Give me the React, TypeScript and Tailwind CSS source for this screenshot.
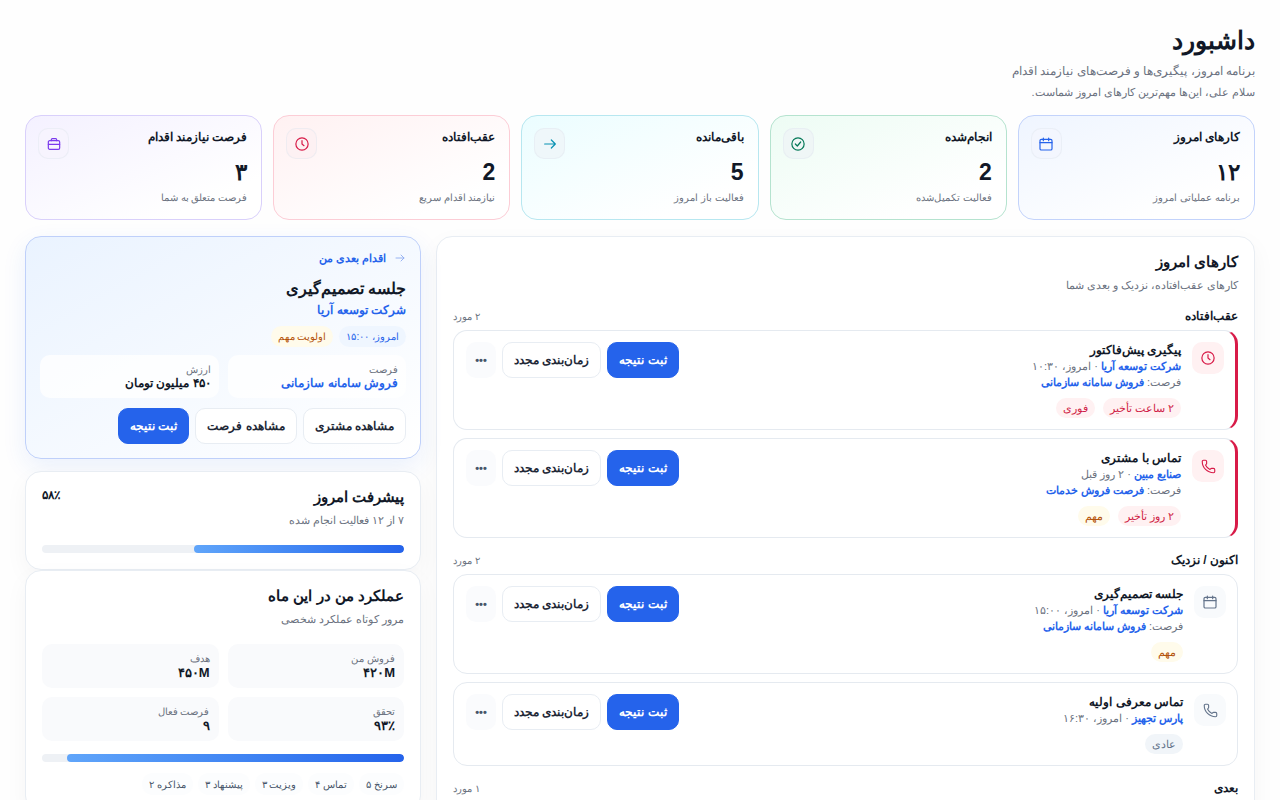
import type { ReactNode } from "react";
import { Phone } from "lucide-react";

type IconProps = { className?: string };

function Icon({ className, children }: { className?: string; children: ReactNode }) {
  return (
    <svg viewBox="0 0 24 24" fill="none" stroke="currentColor" strokeWidth="1.8" strokeLinecap="round" strokeLinejoin="round" className={className} aria-hidden="true">
      {children}
    </svg>
  );
}

const CalendarIcon = ({ className }: IconProps) => (
  <Icon className={className}>
    <rect x="3" y="5" width="18" height="16" rx="2" />
    <path d="M8 3v4M16 3v4M3 10h18" />
  </Icon>
);

const CheckIcon = ({ className }: IconProps) => (
  <Icon className={className}>
    <circle cx="12" cy="12" r="9.200" />
    <path d="m8 12 3 3 5-6" />
  </Icon>
);

const ClockIcon = ({ className }: IconProps) => (
  <Icon className={className}>
    <circle cx="12" cy="12" r="9.200" />
    <path d="M12 7v5l3 2.500" />
  </Icon>
);

const ArrowIcon = ({ className }: IconProps) => (
  <Icon className={className}>
    <path d="M4 12h16M14 6l6 6-6 6" />
  </Icon>
);

const BriefcaseIcon = ({ className }: IconProps) => (
  <Icon className={className}>
    <rect x="3.500" y="7" width="17" height="13" rx="2" />
    <path d="M8 7V5.500A1.500 1.500 0 0 1 9.500 4h5A1.500 1.500 0 0 1 16 5.500V7M3.500 12.500h17" />
  </Icon>
);

const PhoneIcon = () => <Phone className="size-[15px]" strokeWidth={1.8} />;

type Stat = { title: string; value: string; note: string; card: string; icon: ReactNode; iconBox: string };

const stats: Stat[] = [
  { title: "کارهای امروز", value: "۱۲", note: "برنامه عملیاتی امروز", card: "border-[#c3d3fb] from-[#eff5ff]", iconBox: "text-[#2563eb] bg-[#f3f6fe]", icon: <CalendarIcon className="size-4" /> },
  { title: "انجام‌شده", value: "2", note: "فعالیت تکمیل‌شده", card: "border-[#b5e3cf] from-[#edfcf4]", iconBox: "text-[#047857] bg-[#eff6f6]", icon: <CheckIcon className="size-4" /> },
  { title: "باقی‌مانده", value: "5", note: "فعالیت باز امروز", card: "border-[#b7e7f0] from-[#ebfdff]", iconBox: "text-[#0891b2] bg-[#eff7fa]", icon: <ArrowIcon className="size-4" /> },
  { title: "عقب‌افتاده", value: "2", note: "نیازمند اقدام سریع", card: "border-[#fccdd6] from-[#fff1f2]", iconBox: "text-[#d81b48] bg-[#fdf1f3]", icon: <ClockIcon className="size-4" /> },
  { title: "فرصت نیازمند اقدام", value: "۳", note: "فرصت متعلق به شما", card: "border-[#d9d0fb] from-[#f4f1ff]", iconBox: "text-[#7c3aed] bg-[#f7f4fe]", icon: <BriefcaseIcon className="size-4" /> },
];

type Tone = "danger" | "warn" | "plain" | "info";

const tones: Record<Tone, string> = {
  danger: "bg-[#fff1f2] text-[#d01f48]",
  warn: "bg-[#fffbeb] text-[#b45309]",
  plain: "bg-[#f1f5f9] text-[#64748b]",
  info: "bg-[#eff6ff] text-[#2563eb]",
};

type Task = { title: string; company: string; when: string; deal?: string; icon: "clock" | "phone" | "calendar"; late?: boolean; tags: [string, Tone][] };

const groups: { name: string; count: string; tasks: Task[] }[] = [
  {
    name: "عقب‌افتاده",
    count: "۲ مورد",
    tasks: [
      { title: "پیگیری پیش‌فاکتور", company: "شرکت توسعه آریا", when: "امروز، ۱۰:۳۰", deal: "فروش سامانه سازمانی", icon: "clock", late: true, tags: [["۲ ساعت تأخیر", "danger"], ["فوری", "danger"]] },
      { title: "تماس با مشتری", company: "صنایع مبین", when: "۲ روز قبل", deal: "فرصت فروش خدمات", icon: "phone", late: true, tags: [["۲ روز تأخیر", "danger"], ["مهم", "warn"]] },
    ],
  },
  {
    name: "اکنون / نزدیک",
    count: "۲ مورد",
    tasks: [
      { title: "جلسه تصمیم‌گیری", company: "شرکت توسعه آریا", when: "امروز، ۱۵:۰۰", deal: "فروش سامانه سازمانی", icon: "calendar", tags: [["مهم", "warn"]] },
      { title: "تماس معرفی اولیه", company: "پارس تجهیز", when: "امروز، ۱۶:۳۰", icon: "phone", tags: [["عادی", "plain"]] },
    ],
  },
  { name: "بعدی", count: "۱ مورد", tasks: [] },
];

const taskIcons = {
  clock: <ClockIcon className="size-4" />,
  phone: <PhoneIcon />,
  calendar: <CalendarIcon className="size-4" />,
};

function Tag({ tone, small, children }: { tone: Tone; small?: boolean; children: ReactNode }) {
  return <span className={`flex items-center rounded-full px-[7px] ${small ? "h-[21px] text-[10px]" : "h-5 text-[11px]"} ${tones[tone]}`}>{children}</span>;
}

function Button({ primary, children }: { primary?: boolean; children: ReactNode }) {
  return (
    <button type="button" className={`h-9 rounded-[10px] border px-[11px] text-[12px] font-bold whitespace-nowrap ${primary ? "border-[#2563eb] bg-[#2563eb] text-white" : "border-[#e8edf3] bg-white text-[#1f2937]"}`}>
      {children}
    </button>
  );
}

function TaskCard({ task }: { task: Task }) {
  return (
    <li className={`flex items-start gap-[11px] rounded-[14px] border border-[#e5eaf0] bg-white py-[11px] pr-[11px] pl-3 ${task.late ? "border-r-[3px] border-r-[#d81b48]" : ""}`}>
      <span className={`flex size-8 shrink-0 items-center justify-center rounded-[10px] ${task.late ? "bg-[#fff1f2] text-[#d81b48]" : "bg-[#f8fafc] text-[#64748b]"}`}>
        {taskIcons[task.icon]}
      </span>
      <div className="min-w-0 flex-1 text-[11px] leading-4 text-[#6b7280]">
        <h4 className="text-[12px] leading-4 font-bold text-[#111827]">{task.title}</h4>
        <p>
          <a href="#company" className="font-bold text-[#2563eb]">{task.company}</a> · {task.when}
        </p>
        {task.deal && (
          <p>
            فرصت: <a href="#deal" className="font-bold text-[#2563eb]">{task.deal}</a>
          </p>
        )}
        <div className="mt-2 flex gap-2">
          {task.tags.map(([label, tone]) => <Tag key={label} tone={tone}>{label}</Tag>)}
        </div>
      </div>
      <div className="flex shrink-0 gap-[6px]">
        <Button primary>ثبت نتیجه</Button>
        <Button>زمان‌بندی مجدد</Button>
        <button type="button" aria-label="بیشتر" className="h-9 w-[30px] rounded-[10px] bg-[#fafbfd] text-[11px] font-bold text-[#475569]">•••</button>
      </div>
    </li>
  );
}

function Progress({ value, label }: { value: number; label: string }) {
  return (
    <div role="progressbar" aria-label={label} aria-valuenow={value} className="h-2 overflow-hidden rounded-full bg-[#eef1f5]">
      <div className="h-full rounded-full bg-linear-to-l from-[#2563eb] to-[#60a5fa]" style={{ width: `${value}%` }} />
    </div>
  );
}

const panel = "rounded-[16px] border border-[#e8edf3] bg-white px-4 pt-[15px] pb-4 shadow-[0_8px_24px_rgba(15,23,42,0.04)]";
const panelTitle = "text-[15px] leading-5 font-bold";
const panelNote = "mt-[3px] text-[11px] leading-5 text-[#6b7280]";

export default function App() {
  return (
    <main dir="rtl" lang="fa" className="h-screen overflow-hidden bg-[#fefefe] px-[25px] pt-6 font-['Liberation_Sans',sans-serif] text-[#111827]">
      <header>
        <h1 className="text-[25px] leading-8 font-bold">داشبورد</h1>
        <p className="mt-[5px] text-[12px] leading-5 text-[#6b7280]">برنامه امروز، پیگیری‌ها و فرصت‌های نیازمند اقدام</p>
        <p className="mt-px text-[11px] leading-5 text-[#6b7280]">سلام علی، این‌ها مهم‌ترین کارهای امروز شماست.</p>
      </header>

      <section aria-label="آمار" className="mt-[13px] grid grid-cols-5 gap-[11px]">
        {stats.map((s) => (
          <article key={s.title} className={`flex h-[105px] items-start justify-between rounded-[16px] border bg-linear-to-br to-white to-80% pt-3 pr-[14px] pl-3 ${s.card}`}>
            <div>
              <h2 className="text-[12px] leading-[18px] font-bold">{s.title}</h2>
              <p className="mt-3 text-[23px] leading-7 font-bold">{s.value}</p>
              <p className="mt-1 text-[10px] leading-4 text-[#6b7280]">{s.note}</p>
            </div>
            <span className={`flex size-[31px] items-center justify-center rounded-[10px] border border-[#e2e8f0]/50 ${s.iconBox}`}>{s.icon}</span>
          </article>
        ))}
      </section>

      <div className="mt-4 grid grid-cols-[minmax(0,819fr)_minmax(0,396fr)] items-start gap-[15px]">
        <section className={panel}>
          <h2 className={panelTitle}>کارهای امروز</h2>
          <p className={panelNote}>کارهای عقب‌افتاده، نزدیک و بعدی شما</p>
          <div className="mt-3 flex flex-col gap-[13px]">
            {groups.map((g) => (
              <section key={g.name}>
                <div className="flex items-center justify-between">
                  <h3 className="text-[12px] leading-[18px] font-bold">{g.name}</h3>
                  <span className="text-[10px] text-[#6b7280]">{g.count}</span>
                </div>
                <ul className="mt-[5px] flex flex-col gap-2">
                  {g.tasks.map((t) => <TaskCard key={t.title} task={t} />)}
                </ul>
              </section>
            ))}
          </div>
        </section>

        <aside className="flex flex-col">
          <section className="rounded-[16px] border border-[#bfd0fa] bg-linear-to-br from-[#eaf3ff] to-white px-[14px] pt-[13px] pb-[14px] shadow-[0_8px_24px_rgba(37,99,235,0.09)]">
            <div className="flex items-center gap-2 text-[11px] leading-4 font-bold text-[#2563eb]">
              <ArrowIcon className="size-3 text-[#8fabf0]" />
              اقدام بعدی من
            </div>
            <h2 className="mt-[11px] text-[16px] leading-6 font-bold">جلسه تصمیم‌گیری</h2>
            <a href="#company" className="mt-px block text-[12px] leading-4 font-bold text-[#2563eb]">شرکت توسعه آریا</a>
            <div className="mt-2 flex gap-[6px]">
              <Tag small tone="info">امروز، ۱۵:۰۰</Tag>
              <Tag small tone="warn">اولویت مهم</Tag>
            </div>
            <dl className="mt-2 grid grid-cols-2 gap-[9px]">
              <div className="rounded-[10px] bg-white/80 p-2">
                <dt className="text-[10px] leading-[13px] text-[#6b7280]">فرصت</dt>
                <dd className="text-[12px] leading-[14px] font-bold text-[#2563eb]"><a href="#deal">فروش سامانه سازمانی</a></dd>
              </div>
              <div className="rounded-[10px] bg-white/80 p-2">
                <dt className="text-[10px] leading-[13px] text-[#6b7280]">ارزش</dt>
                <dd className="text-[12px] leading-[14px] font-bold">۴۵۰ میلیون تومان</dd>
              </div>
            </dl>
            <div className="mt-[10px] flex gap-[6px]">
              <Button>مشاهده مشتری</Button>
              <Button>مشاهده فرصت</Button>
              <Button primary>ثبت نتیجه</Button>
            </div>
          </section>

          <section className={`${panel} mt-3`}>
            <div className="flex items-start justify-between">
              <h2 className={panelTitle}>پیشرفت امروز</h2>
              <span className="text-[12px] leading-4 font-bold">۵۸٪</span>
            </div>
            <p className={panelNote}>۷ از ۱۲ فعالیت انجام شده</p>
            <div className="mt-[15px]">
              <Progress value={58} label="پیشرفت امروز" />
            </div>
          </section>

          <section className={panel}>
            <h2 className={panelTitle}>عملکرد من در این ماه</h2>
            <p className={panelNote}>مرور کوتاه عملکرد شخصی</p>
            <dl className="mt-[15px] grid grid-cols-2 gap-[9px]">
              {[["فروش من", "۴۲۰M"], ["هدف", "۴۵۰M"], ["تحقق", "۹۳٪"], ["فرصت فعال", "۹"]].map(([k, v]) => (
                <div key={k} className="rounded-[10px] bg-[#f9fafc] px-[9px] py-2">
                  <dt className="text-[10px] leading-[14px] text-[#6b7280]">{k}</dt>
                  <dd className="text-[13px] leading-[14px] font-bold">{v}</dd>
                </div>
              ))}
            </dl>
            <div className="mt-[13px]">
              <Progress value={93} label="تحقق هدف" />
            </div>
            <ul className="mt-[11px] flex gap-[5px] text-[10px] text-[#475569]">
              {["سرنخ ۵", "تماس ۴", "ویزیت ۳", "پیشنهاد ۳", "مذاکره ۲"].map((t) => (
                <li key={t} className="flex h-[22px] items-center rounded-full bg-[#fcfdfe] px-[7px]">{t}</li>
              ))}
            </ul>
          </section>
        </aside>
      </div>
    </main>
  );
}
